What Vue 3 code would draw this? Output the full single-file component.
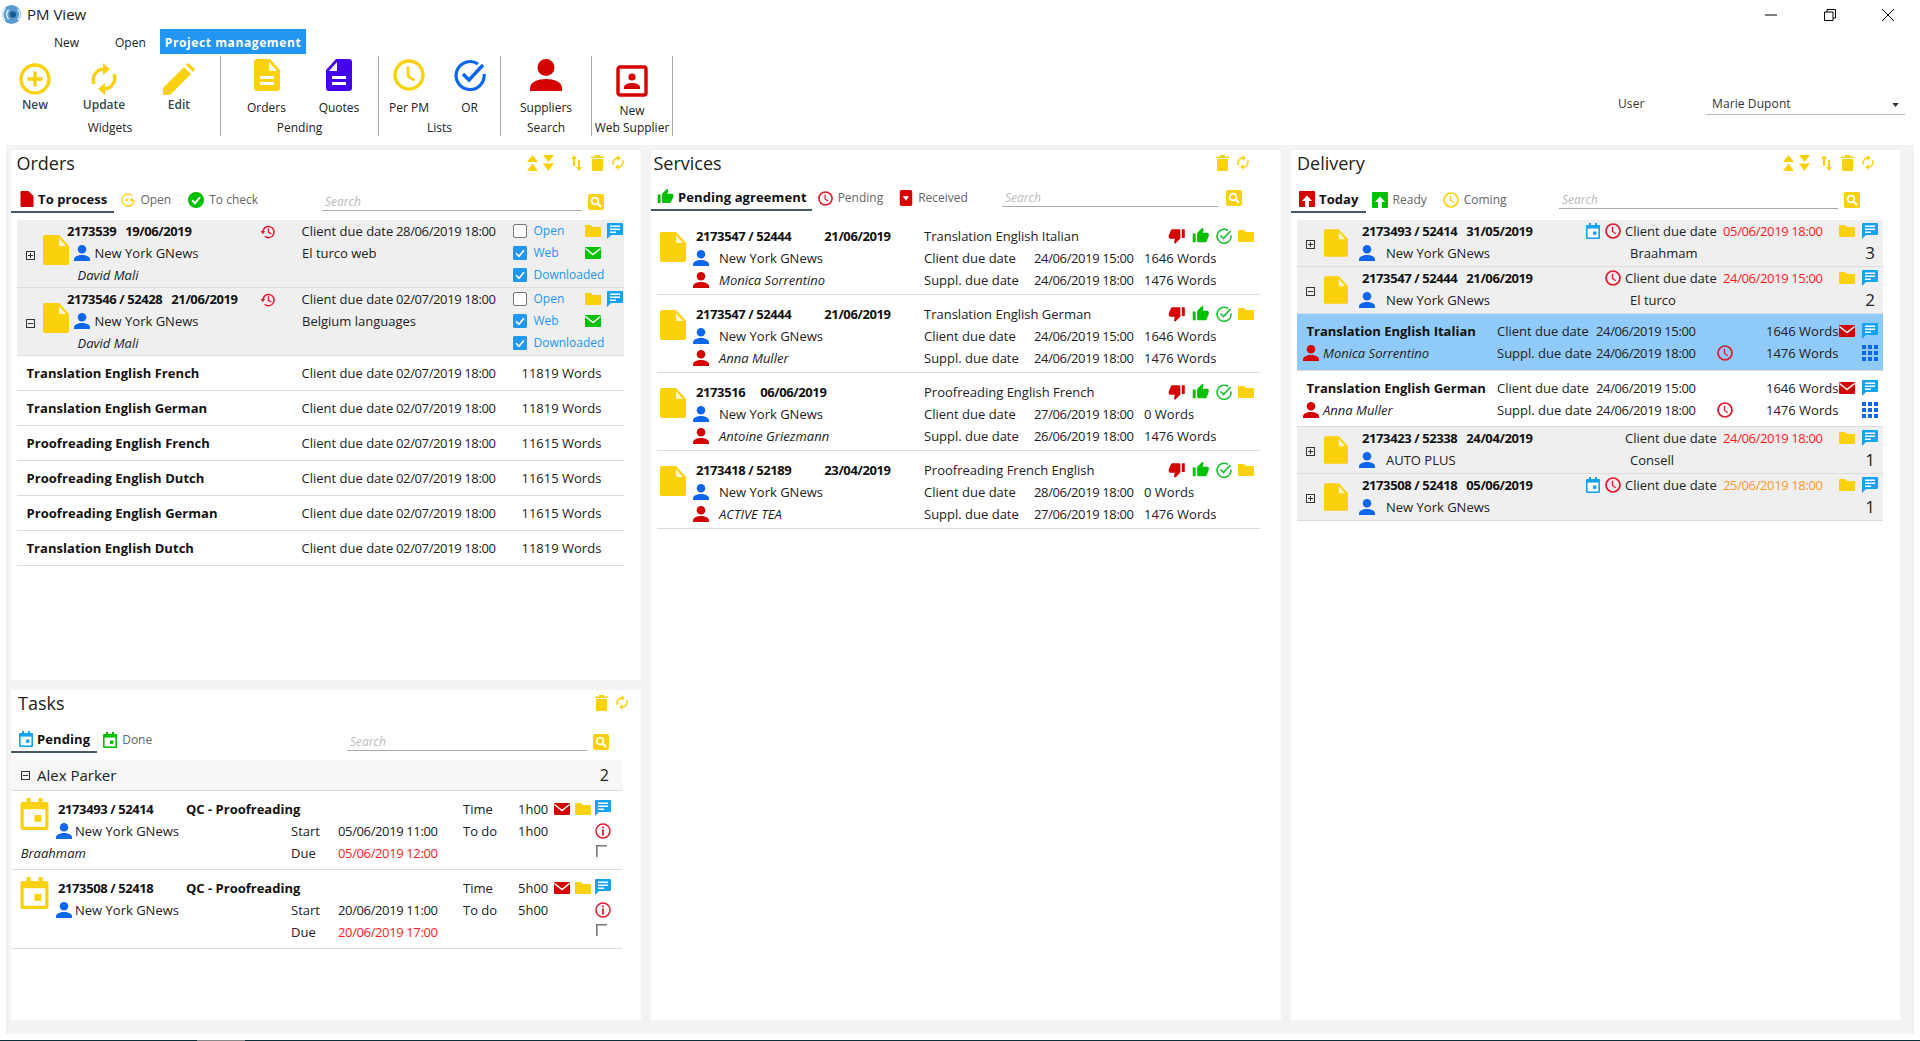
<script setup>
const orderGroups = [
  { id: '2173539', date: '19/06/2019', due: '28/06/2019 18:00', sub: 'El turco web', exp: 'plus' },
  { id: '2173546 / 52428', date: '21/06/2019', due: '02/07/2019 18:00', sub: 'Belgium languages', exp: 'minus' }
]
const orderItems = [
  ['Translation English French', '11819 Words'],
  ['Translation English German', '11819 Words'],
  ['Proofreading English French', '11615 Words'],
  ['Proofreading English Dutch', '11615 Words'],
  ['Proofreading English German', '11615 Words'],
  ['Translation English Dutch', '11819 Words']
]
const services = [
  { id: '2173547 / 52444', date: '21/06/2019', title: 'Translation English Italian', who: 'Monica Sorrentino', d1: '24/06/2019 15:00', w1: '1646 Words', d2: '24/06/2019 18:00' },
  { id: '2173547 / 52444', date: '21/06/2019', title: 'Translation English German', who: 'Anna Muller', d1: '24/06/2019 15:00', w1: '1646 Words', d2: '24/06/2019 18:00' },
  { id: '2173516', short: true, date: '06/06/2019', title: 'Proofreading English French', who: 'Antoine Griezmann', d1: '27/06/2019 18:00', w1: '0 Words', d2: '26/06/2019 18:00' },
  { id: '2173418 / 52189', date: '23/04/2019', title: 'Proofreading French English', who: 'ACTIVE TEA', d1: '28/06/2019 18:00', w1: '0 Words', d2: '27/06/2019 18:00' }
]
const delivery = [
  { t: 'g', exp: 'plus', id: '2173493 / 52414', date: '31/05/2019', cal: true, clock: true, due: '05/06/2019 18:00', tone: 'red', client: 'New York GNews', sub: 'Braahmam', n: 3 },
  { t: 'g', exp: 'minus', id: '2173547 / 52444', date: '21/06/2019', clock: true, due: '24/06/2019 15:00', tone: 'red', client: 'New York GNews', sub: 'El turco', n: 2 },
  { t: 'i', sel: true, title: 'Translation English Italian', who: 'Monica Sorrentino' },
  { t: 'i', title: 'Translation English German', who: 'Anna Muller' },
  { t: 'g', exp: 'plus', id: '2173423 / 52338', date: '24/04/2019', due: '24/06/2019 18:00', tone: 'red', client: 'AUTO PLUS', sub: 'Consell', n: 1 },
  { t: 'g', exp: 'plus', id: '2173508 / 52418', date: '05/06/2019', cal: true, clock: true, due: '25/06/2019 18:00', tone: 'orange', client: 'New York GNews', sub: '', n: 1 }
]
const tasks = [
  { id: '2173493 / 52414', time: '1h00', start: '05/06/2019 11:00', due: '05/06/2019 12:00', who: 'Braahmam' },
  { id: '2173508 / 52418', time: '5h00', start: '20/06/2019 11:00', due: '20/06/2019 17:00', who: '' }
]
</script>

<template>
  <div class="app">
    <svg class="sprite" aria-hidden="true">
      <symbol id="s-plusc" viewBox="0 0 32 32"><circle cx="16" cy="16" r="14" fill="none" stroke="currentColor" stroke-width="3.4"/><path d="M16 8.5v15M8.5 16h15" stroke="currentColor" stroke-width="3.4" fill="none"/></symbol>
      <symbol id="s-refresh" viewBox="0 0 26 32"><path d="M3 21A11 11 0 0 1 13 6M23 11a11 11 0 0 1-10 15" fill="none" stroke="currentColor" stroke-width="3.4"/><path d="M12 0v12l7-6zM14 20v12l-7-6z" fill="currentColor"/></symbol>
      <symbol id="s-pencil" viewBox="0 0 32 32"><path d="M0 32v-7L21 4l7 7L7 32zM23 2l2-2 7 6-2 3z" fill="currentColor"/></symbol>
      <symbol id="s-doclines" viewBox="0 0 26 32"><path d="M3 0h13l10 11v18a3 3 0 0 1-3 3H3a3 3 0 0 1-3-3V3a3 3 0 0 1 3-3z" fill="currentColor"/><path d="M15 3l8 9h-8z" fill="#fff"/><path d="M6 17h14v3H6zM6 23h14v3H6z" fill="#fff"/></symbol>
      <symbol id="s-clock" viewBox="0 0 32 32"><circle cx="16" cy="16" r="14" fill="none" stroke="currentColor" stroke-width="3.4"/><path d="M15 7.5V17l6.5 4.5" fill="none" stroke="currentColor" stroke-width="2.6"/></symbol>
      <symbol id="s-ocheck" viewBox="0 0 32 32"><path d="M24 5A14 14 0 1 0 30 15" fill="none" stroke="currentColor" stroke-width="3.2"/><path d="M9 15l6 6L29 6" fill="none" stroke="currentColor" stroke-width="3.4"/></symbol>
      <symbol id="s-person" viewBox="0 0 32 32"><circle cx="16" cy="8.5" r="8.5" fill="currentColor"/><path d="M0 32v-3c0-6 8-9 16-9s16 3 16 9v3z" fill="currentColor"/></symbol>
      <symbol id="s-contact" viewBox="0 0 32 32"><rect x="2" y="2" width="28" height="28" rx="2" fill="none" stroke="currentColor" stroke-width="3.4"/><circle cx="16" cy="12" r="3.6" fill="currentColor"/><path d="M8 24v-2c0-2 4-4 8-4s8 2 8 4v2z" fill="currentColor"/></symbol>
      <symbol id="s-doc" viewBox="0 0 26 30"><path d="M2 0h14l10 11v17a2 2 0 0 1-2 2H2a2 2 0 0 1-2-2V2a2 2 0 0 1 2-2z" fill="currentColor"/><path d="M16 3l7 8h-7z" fill="#fff5c8"/></symbol>
      <symbol id="s-folder" viewBox="0 0 16 12"><path d="M0 1a1 1 0 0 1 1-1h5l2 2h7a1 1 0 0 1 1 1v8a1 1 0 0 1-1 1H1a1 1 0 0 1-1-1z" fill="currentColor"/></symbol>
      <symbol id="s-chat" viewBox="0 0 16 16"><path d="M1 0h14a1 1 0 0 1 1 1v10a1 1 0 0 1-1 1H4l-4 4V1a1 1 0 0 1 1-1z" fill="currentColor"/><path d="M3 2.5h10V4H3zM3 5.5h10V7H3zM3 8.5h6V10H3z" fill="#fff"/></symbol>
      <symbol id="s-mail" viewBox="0 0 16 12"><rect width="16" height="12" rx="1" fill="currentColor"/><path d="M.5 1.500L8 7.500l7.500-6" fill="none" stroke="#fff" stroke-width="1.6"/></symbol>
      <symbol id="s-cal" viewBox="0 0 14 16"><path d="M1 2h2V0h2v2h4V0h2v2h2a1 1 0 0 1 1 1v12a1 1 0 0 1-1 1H1a1 1 0 0 1-1-1V3a1 1 0 0 1 1-1z" fill="currentColor"/><rect x="1.6" y="5.6" width="10.8" height="8.8" fill="#fff"/><rect x="7" y="8.5" width="3.4" height="3.4" fill="currentColor"/></symbol>
      <symbol id="s-cut" viewBox="0 0 13 16"><path d="M1 0h7l5 5v10a1 1 0 0 1-1 1H1a1 1 0 0 1-1-1V1a1 1 0 0 1 1-1z" fill="currentColor"/></symbol>
      <symbol id="s-otab" viewBox="0 0 16 16"><path d="M12.500 2.800A7 7 0 1 0 15 8" fill="none" stroke="currentColor" stroke-width="1.6"/><circle cx="6.500" cy="8" r="1.500" fill="currentColor"/><path d="M9.500 8h3.500M11.500 6l2 2-2 2" fill="none" stroke="currentColor" stroke-width="1.3"/></symbol>
      <symbol id="s-okfill" viewBox="0 0 16 16"><circle cx="8" cy="8" r="8" fill="currentColor"/><path d="M4 8.200l3 3 5-6" fill="none" stroke="#fff" stroke-width="2"/></symbol>
      <symbol id="s-recv" viewBox="0 0 14 18"><rect width="14" height="18" rx="2" fill="currentColor"/><path d="M3.500 7h7L7 12z" fill="#fff"/></symbol>
      <symbol id="s-upbox" viewBox="0 0 16 16"><rect width="16" height="16" rx="1" fill="currentColor"/><path d="M8 4.500l5 5.500h-3v6H6v-6H3z" fill="#fff"/></symbol>
      <symbol id="s-thup" viewBox="0 0 24 24"><path d="M1 21h4V9H1v12zm22-11c0-1.100-.9-2-2-2h-6.310l.95-4.570.03-.32c0-.41-.17-.79-.44-1.060L14.170 1 7.590 7.590C7.220 7.950 7 8.450 7 9v10c0 1.100.9 2 2 2h9c.83 0 1.540-.5 1.840-1.220l3.020-7.050c.09-.23.14-.47.14-.73v-2z" fill="currentColor"/></symbol>
      <symbol id="s-thdown" viewBox="0 0 24 24"><path d="M15 3H6c-.83 0-1.540.5-1.840 1.220l-3.020 7.050c-.09.23-.14.47-.14.73v2c0 1.100.9 2 2 2h6.310l-.95 4.570-.03.32c0 .41.17.79.44 1.060L9.830 23l6.590-6.590c.36-.36.58-.86.58-1.410V5c0-1.100-.9-2-2-2zm4 0v12h4V3h-4z" fill="currentColor"/></symbol>
      <symbol id="s-history" viewBox="0 0 16 16"><path d="M2.500 8.500a6 6 0 1 1 2 4.600" fill="none" stroke="currentColor" stroke-width="1.6"/><path d="M0 7.500h5L2.500 11z" fill="currentColor"/><path d="M8.500 4.500V9l3 1.600" fill="none" stroke="currentColor" stroke-width="1.4"/></symbol>
      <symbol id="s-grid" viewBox="0 0 16 16"><path d="M0 0h4v4H0zM6 0h4v4H6zM12 0h4v4h-4zM0 6h4v4H0zM6 6h4v4H6zM12 6h4v4h-4zM0 12h4v4H0zM6 12h4v4H6zM12 12h4v4h-4z" fill="currentColor"/></symbol>
      <symbol id="s-info" viewBox="0 0 16 16"><circle cx="8" cy="8" r="7" fill="none" stroke="currentColor" stroke-width="1.5"/><path d="M7.100 3.500h1.800v1.800H7.100zM7.100 6.600h1.800v6H7.100z" fill="currentColor"/></symbol>
      <symbol id="s-flag" viewBox="0 0 11 12"><path d="M.8 12V.8H11" fill="none" stroke="currentColor" stroke-width="1.6"/></symbol>
      <symbol id="s-ups" viewBox="0 0 11 16"><path d="M5.500 0L11 7H0zM5.500 8.500L11 16H0z" fill="currentColor"/></symbol>
      <symbol id="s-downs" viewBox="0 0 11 16"><path d="M0 0h11L5.500 7zM0 8.500h11L5.500 16z" fill="currentColor"/></symbol>
      <symbol id="s-sort" viewBox="0 0 11 16"><path d="M3 0l3 4H4v7H2V4H0zM7 5h2v7h2l-3 4-3-4h2z" fill="currentColor"/></symbol>
      <symbol id="s-trash" viewBox="0 0 13 16"><path d="M4 0h5v1.400h4V3H0V1.400h4zM1 4h11v11a1 1 0 0 1-1 1H2a1 1 0 0 1-1-1z" fill="currentColor"/></symbol>
      <symbol id="s-search" viewBox="0 0 16 16"><rect width="16" height="16" rx="2" fill="currentColor"/><circle cx="7" cy="7" r="3.4" fill="none" stroke="#fff" stroke-width="1.8"/><path d="M9.500 9.500l3.500 3.500" stroke="#fff" stroke-width="2"/></symbol>
      <symbol id="s-cb" viewBox="0 0 14 14"><rect width="14" height="14" rx="1.5" fill="currentColor"/><path d="M3 7.200l3 3 5-6" fill="none" stroke="#fff" stroke-width="1.6"/></symbol>
      <symbol id="s-plus" viewBox="0 0 9 9"><rect x=".5" y=".5" width="8" height="8" fill="none" stroke="currentColor"/><path d="M2 4.500h5M4.500 2v5" stroke="currentColor"/></symbol>
      <symbol id="s-minus" viewBox="0 0 9 9"><rect x=".5" y=".5" width="8" height="8" fill="none" stroke="currentColor"/><path d="M2 4.500h5" stroke="currentColor"/></symbol>
      <symbol id="s-logo" viewBox="0 0 20 20"><circle cx="10" cy="10" r="10" fill="#5a9bcf"/><circle cx="11.500" cy="10" r="3.4" fill="#1a5f94"/><path d="M3.500 3.500a9.500 9.500 0 0 0 0 13M7 5a7 7 0 0 0 0 10M16.500 4.500a8 8 0 0 1 0 11" fill="none" stroke="#eef5fb" stroke-width="1.4"/></symbol>
    </svg>

    <header class="titlebar">
      <svg class="logo"><use href="#s-logo"/></svg>
      <span class="apptitle">PM View</span>
      <div class="winbtns">
        <svg class="wb" viewBox="0 0 12 12"><path d="M0 6h12" stroke="#000" stroke-width="1" fill="none"/></svg>
        <svg class="wb" viewBox="0 0 12 12"><path d="M.5 3h8.500v8.500H.5zM3 3V.5h8.500V9H9" stroke="#000" stroke-width="1" fill="none"/></svg>
        <svg class="wb" viewBox="0 0 12 12"><path d="M0 0l12 12M12 0L0 12" stroke="#000" stroke-width="1" fill="none"/></svg>
      </div>
    </header>

    <nav class="menu">
      <span class="m1">New</span>
      <span class="m2">Open</span>
      <span class="m3">Project management</span>
    </nav>

    <section class="ribbon">
      <div class="group g1">
        <div class="items">
          <div class="item"><svg class="ri yellow"><use href="#s-plusc"/></svg><span class="strong">New</span></div>
          <div class="item"><svg class="ri yellow"><use href="#s-refresh"/></svg><span class="strong">Update</span></div>
          <div class="item"><svg class="ri yellow"><use href="#s-pencil"/></svg><span class="strong">Edit</span></div>
        </div>
        <div class="gtitle">Widgets</div>
      </div>
      <div class="group g2">
        <div class="items">
          <div class="item"><svg class="ri narrow yellow"><use href="#s-doclines"/></svg><span>Orders</span></div>
          <div class="item"><svg class="ri narrow violet flip"><use href="#s-doclines"/></svg><span>Quotes</span></div>
        </div>
        <div class="gtitle">Pending</div>
      </div>
      <div class="group g3">
        <div class="items">
          <div class="item"><svg class="ri yellow"><use href="#s-clock"/></svg><span>Per PM</span></div>
          <div class="item"><svg class="ri blue"><use href="#s-ocheck"/></svg><span>OR</span></div>
        </div>
        <div class="gtitle">Lists</div>
      </div>
      <div class="group g4">
        <div class="items">
          <div class="item"><svg class="ri red"><use href="#s-person"/></svg><span>Suppliers</span></div>
        </div>
        <div class="gtitle">Search</div>
      </div>
      <div class="group g5">
        <div class="items">
          <div class="item"><svg class="ri red"><use href="#s-contact"/></svg><span>New</span></div>
        </div>
        <div class="gtitle">Web Supplier</div>
      </div>
      <div class="user">
        <span class="ulabel">User</span>
        <div class="dropdown">
          <span>Marie Dupont</span>
          <svg class="caret" viewBox="0 0 8 5"><path d="M0 0h8L4 5z" fill="#333"/></svg>
        </div>
      </div>
    </section>

    <main class="content">
      <div class="leftcol">
        <section class="panel p-orders">
          <div class="head">
            <h2>Orders</h2>
            <div class="tools">
              <svg class="t11 yellow"><use href="#s-ups"/></svg>
              <svg class="t11 yellow tdown"><use href="#s-downs"/></svg>
              <svg class="t11 yellow tsort"><use href="#s-sort"/></svg>
              <svg class="t13 yellow ttrash"><use href="#s-trash"/></svg>
              <svg class="t12 yellow trefresh"><use href="#s-refresh"/></svg>
            </div>
          </div>
          <div class="tabs">
            <div class="tab active"><svg class="tb14 red"><use href="#s-cut"/></svg><span>To process</span></div>
            <div class="tab"><svg class="tb14 yellow"><use href="#s-otab"/></svg><span>Open</span></div>
            <div class="tab"><svg class="tb16 green"><use href="#s-okfill"/></svg><span>To check</span></div>
            <div class="search">
              <div class="sfield">Search</div>
              <svg class="sbtn yellow"><use href="#s-search"/></svg>
            </div>
          </div>
          <div class="list o-list">
            <div v-for="g in orderGroups" :key="g.id" class="o-group">
              <svg class="exp o-exp"><use :href="'#s-' + g.exp"/></svg>
              <svg class="doc o-doc"><use href="#s-doc"/></svg>
              <div class="o-l1 b num"><span>{{ g.id }}</span><span class="gap9">{{ g.date }}</span></div>
              <svg class="hist crimson"><use href="#s-history"/></svg>
              <div class="o-due"><span class="lab94">Client due date</span><span class="dt">{{ g.due }}</span></div>
              <div class="o-chk r1"><span class="cb0"></span><span class="lnk">Open</span></div>
              <div class="icons r1c"><svg class="fo yellow"><use href="#s-folder"/></svg><svg class="ch sky"><use href="#s-chat"/></svg></div>
              <div class="o-l2"><svg class="pe blue"><use href="#s-person"/></svg><span>New York GNews</span></div>
              <div class="o-sub">{{ g.sub }}</div>
              <div class="o-chk r2"><svg class="cb sky2"><use href="#s-cb"/></svg><span class="lnk">Web</span></div>
              <div class="icons r2c"><svg class="fo green"><use href="#s-mail"/></svg></div>
              <div class="o-l3 i">David Mali</div>
              <div class="o-chk r3"><svg class="cb sky2"><use href="#s-cb"/></svg><span class="lnk">Downloaded</span></div>
            </div>
            <div v-for="it in orderItems" :key="it[0]" class="o-item">
              <div class="b o-title">{{ it[0] }}</div>
              <div class="o-duei"><span class="lab94">Client due date</span><span class="dt">02/07/2019 18:00</span></div>
              <div>{{ it[1] }}</div>
            </div>
          </div>
        </section>

        <section class="panel p-tasks">
          <div class="head">
            <h2>Tasks</h2>
            <div class="tools">
              <svg class="t13 yellow"><use href="#s-trash"/></svg>
              <svg class="t12 yellow trefresh"><use href="#s-refresh"/></svg>
            </div>
          </div>
          <div class="tabs">
            <div class="tab active"><svg class="tb14 sky"><use href="#s-cal"/></svg><span>Pending</span></div>
            <div class="tab"><svg class="tb14 green"><use href="#s-cal"/></svg><span>Done</span></div>
            <div class="search">
              <div class="sfield">Search</div>
              <svg class="sbtn yellow"><use href="#s-search"/></svg>
            </div>
          </div>
          <div class="t-head">
            <svg class="exp"><use href="#s-minus"/></svg>
            <span class="t-name">Alex Parker</span>
            <span class="t-count">2</span>
          </div>
          <div v-for="t in tasks" :key="t.id" class="t-row">
            <svg class="t-cal yellow"><use href="#s-cal"/></svg>
            <div class="b t-id num">{{ t.id }}</div>
            <div class="b t-qc">QC - Proofreading</div>
            <div class="c6">Time</div>
            <div class="c7">{{ t.time }}</div>
            <div class="c8 t-icons"><svg class="fo red"><use href="#s-mail"/></svg><svg class="fo yellow"><use href="#s-folder"/></svg><svg class="ch sky"><use href="#s-chat"/></svg></div>
            <div class="t-cl"><svg class="pe blue"><use href="#s-person"/></svg><span>New York GNews</span></div>
            <div class="c4">Start</div>
            <div class="c5 dt">{{ t.start }}</div>
            <div class="c6">To do</div>
            <div class="c7">{{ t.time }}</div>
            <div class="c8 t-mark"><svg class="pe crimson"><use href="#s-info"/></svg></div>
            <div class="t-who i">{{ t.who }}</div>
            <div class="c4">Due</div>
            <div class="c5 dt redt">{{ t.due }}</div>
            <div class="c8 t-flag"><svg class="fl"><use href="#s-flag"/></svg></div>
          </div>
        </section>
      </div>

      <section class="panel p-services">
        <div class="head">
          <h2>Services</h2>
          <div class="tools">
            <svg class="t13 yellow"><use href="#s-trash"/></svg>
            <svg class="t12 yellow trefresh"><use href="#s-refresh"/></svg>
          </div>
        </div>
        <div class="tabs">
          <div class="tab active"><svg class="tb17 green"><use href="#s-thup"/></svg><span>Pending agreement</span></div>
          <div class="tab"><svg class="tb15 crimson"><use href="#s-clock"/></svg><span>Pending</span></div>
          <div class="tab"><svg class="tb14h red"><use href="#s-recv"/></svg><span>Received</span></div>
          <div class="search">
            <div class="sfield">Search</div>
            <svg class="sbtn yellow"><use href="#s-search"/></svg>
          </div>
        </div>
        <div class="list">
          <div v-for="s in services" :key="s.id + s.title" class="s-row">
            <svg class="doc s-doc"><use href="#s-doc"/></svg>
            <div class="s-l1 b num"><span>{{ s.id }}</span><span :class="s.short ? 'gap15' : 'gap33'">{{ s.date }}</span></div>
            <div class="s-title">
              <span>{{ s.title }}</span>
              <div class="s-icons">
                <svg class="th red"><use href="#s-thdown"/></svg>
                <svg class="th green"><use href="#s-thup"/></svg>
                <svg class="pe limeg"><use href="#s-ocheck"/></svg>
                <svg class="fo yellow"><use href="#s-folder"/></svg>
              </div>
            </div>
            <div class="s-who"><svg class="pe blue"><use href="#s-person"/></svg><span>New York GNews</span></div>
            <div class="s3">Client due date</div>
            <div class="s4 dt">{{ s.d1 }}</div>
            <div class="s5">{{ s.w1 }}</div>
            <div class="s-who"><svg class="pe red"><use href="#s-person"/></svg><span class="i">{{ s.who }}</span></div>
            <div class="s3">Suppl. due date</div>
            <div class="s4 dt">{{ s.d2 }}</div>
            <div class="s5">1476 Words</div>
          </div>
        </div>
      </section>

      <section class="panel p-delivery">
        <div class="head">
          <h2>Delivery</h2>
          <div class="tools">
            <svg class="t11 yellow"><use href="#s-ups"/></svg>
            <svg class="t11 yellow tdown"><use href="#s-downs"/></svg>
            <svg class="t11 yellow tsort"><use href="#s-sort"/></svg>
            <svg class="t13 yellow ttrash"><use href="#s-trash"/></svg>
            <svg class="t12 yellow trefresh"><use href="#s-refresh"/></svg>
          </div>
        </div>
        <div class="tabs">
          <div class="tab active"><svg class="tb16 red"><use href="#s-upbox"/></svg><span>Today</span></div>
          <div class="tab"><svg class="tb16 green"><use href="#s-upbox"/></svg><span>Ready</span></div>
          <div class="tab"><svg class="tb16 yellow"><use href="#s-clock"/></svg><span>Coming</span></div>
          <div class="search">
            <div class="sfield">Search</div>
            <svg class="sbtn yellow"><use href="#s-search"/></svg>
          </div>
        </div>
        <div class="list">
          <template v-for="(d, idx) in delivery" :key="idx">
            <div v-if="d.t === 'g'" class="d-group">
              <svg class="exp d-exp"><use :href="'#s-' + d.exp"/></svg>
              <svg class="doc d-doc"><use href="#s-doc"/></svg>
              <div class="d-l1 b num"><span>{{ d.id }}</span><span class="gap9">{{ d.date }}</span></div>
              <div class="d-flags">
                <svg v-if="d.cal" class="tb14 sky"><use href="#s-cal"/></svg>
                <svg v-if="d.clock" class="pe crimson"><use href="#s-clock"/></svg>
              </div>
              <div class="d-due"><span class="lab98">Client due date</span><span class="dt" :class="d.tone === 'red' ? 'redt' : 'oranget'">{{ d.due }}</span></div>
              <div class="icons d-ic"><svg class="fo yellow"><use href="#s-folder"/></svg><svg class="ch sky"><use href="#s-chat"/></svg></div>
              <div class="d-l2"><svg class="pe blue"><use href="#s-person"/></svg><span>{{ d.client }}</span></div>
              <div class="d-sub">{{ d.sub }}</div>
              <div class="d-n">{{ d.n }}</div>
            </div>
            <div v-else class="d-item" :class="{ sel: d.sel }">
              <div class="b d-title">{{ d.title }}</div>
              <div>Client due date</div>
              <div class="dt">24/06/2019 15:00</div>
              <div></div>
              <div>1646 Words</div>
              <svg class="fo red d-mail"><use href="#s-mail"/></svg>
              <svg class="ch sky"><use href="#s-chat"/></svg>
              <div class="d-who"><svg class="pe red"><use href="#s-person"/></svg><span class="i">{{ d.who }}</span></div>
              <div>Suppl. due date</div>
              <div class="dt">24/06/2019 18:00</div>
              <svg class="pe crimson"><use href="#s-clock"/></svg>
              <div>1476 Words</div>
              <div></div>
              <svg class="pe blue"><use href="#s-grid"/></svg>
            </div>
          </template>
        </div>
      </section>
    </main>

    <div class="bottomline"><span class="bl-seg"></span></div>
  </div>
</template>

<style>
html, body { margin: 0; background: #fff; }
</style>

<style scoped>
.app { width: 1920px; height: 1041px; display: flex; flex-direction: column; overflow: hidden; background: #fff; font-family: "Open Sans", "Liberation Sans", sans-serif; font-size: 13px; color: #212121; }
.sprite { width: 0; height: 0; position: absolute; }
svg { display: block; flex: none; overflow: visible; }

.yellow { color: #fbd00c; } .red { color: #d50000; } .blue { color: #0d66ee; } .violet { color: #4500ee; }
.green { color: #00c000; } .crimson { color: #e0182c; } .sky { color: #12a4f4; } .sky2 { color: #2196f3; } .limeg { color: #18c030; }
.b { font-weight: 700; color: #111; } .i { font-style: italic; }
.redt { color: #ff1a1a; } .oranget { color: #fb9a1e; }
.dt { letter-spacing: -.37px; }
.num { letter-spacing: -.4px; }

.titlebar { height: 29px; display: flex; align-items: center; flex: none; }
.logo { width: 19px; height: 19px; margin-left: 2px; }
.apptitle { margin-left: 6px; font-size: 15px; padding-bottom: 2px; }
.winbtns { margin-left: auto; display: flex; gap: 46.500px; padding-right: 26px; }
.wb { width: 12px; height: 12px; }

.menu { height: 25px; flex: none; display: flex; align-items: flex-start; font-size: 12px; line-height: 28px; }
.m1 { margin-left: 54px; width: 24px; }
.m2 { margin-left: 37px; width: 30px; }
.m3 { margin-left: 15px; width: 146px; height: 25px; background: #2196f3; color: #fff; font-weight: 700; text-align: center; letter-spacing: .6px; }

.ribbon { height: 80px; margin-top: 2px; flex: none; display: flex; font-size: 12px; }
.group { display: flex; flex-direction: column; border-right: 1px solid #aaa; box-sizing: border-box; }
.items { height: 67px; display: grid; }
.item { display: flex; flex-direction: column; align-items: center; line-height: 16px; }
.gtitle { text-align: center; line-height: 16px; white-space: nowrap; }
.ri { width: 32px; height: 32px; }
.narrow { width: 26px; }
.flip { transform: scaleX(-1); }
.strong { font-weight: 600; color: #37474f; }
.g1 { width: 221px; } .g1 .items { grid-template-columns: 70px 68px 82px; } .g1 .item { padding-top: 7px; gap: 2px; }
.g2 { width: 158px; } .g2 .items { grid-template-columns: 91px 54px; } .g2 .item { padding-top: 3px; gap: 9px; }
.g3 { width: 122px; } .g3 .items { grid-template-columns: 60px 61px; } .g3 .item { padding-top: 3px; gap: 9px; }
.g4 { width: 91px; } .g4 .items { grid-template-columns: 90px; } .g4 .item { padding-top: 3px; gap: 9px; }
.g5 { width: 81px; } .g5 .items { grid-template-columns: 80px; } .g5 .item { padding-top: 9px; gap: 6px; }
.user { margin-left: auto; margin-right: 15px; display: flex; align-items: flex-start; padding-top: 40px; font-size: 12px; color: #333; letter-spacing: .1px; }
.ulabel { width: 88px; line-height: 16px; }
.dropdown { width: 199px; height: 18px; border-bottom: 1px solid #bbb; display: flex; align-items: center; justify-content: space-between; }
.dropdown span { padding: 0 0 3px 6px; }
.caret { width: 7px; height: 4px; margin-right: 6px; }

.content { margin: 9px 6px 0; height: 889px; flex: none; box-sizing: border-box; padding: 5px 14px 14px 5px; background: #f3f3f3; display: grid; grid-template-columns: 630px 630px 609px; column-gap: 10px; }
.leftcol { display: flex; flex-direction: column; gap: 10px; }
.panel { background: #fff; min-width: 0; }
.p-orders { height: 530px; }
.p-tasks { height: 330px; }

.head { height: 26px; display: flex; align-items: center; }
h2 { margin: 0; font-size: 18px; font-weight: 400; color: #212121; }
.tools { margin-left: auto; display: flex; }
.t11 { width: 11px; height: 16px; } .t12 { width: 12px; height: 15px; } .t13 { width: 13px; height: 16px; }
.tdown { margin-left: 5px; } .tsort { margin-left: 17px; } .ttrash { margin-left: 9px; } .trefresh { margin-left: 8px; }
.p-orders .head { padding: 0 17px 0 5.500px; }
.p-services .head { padding: 0 32px 0 2.500px; }
.p-delivery .head { padding: 0 26px 0 6px; }
.p-delivery .tsort { margin-left: 11px; }
.p-tasks .head { padding: 0 13px 0 7px; }

.tabs { height: 37px; display: flex; font-size: 12px; }
.p-services .tabs { height: 35px; }
.tab { height: 100%; box-sizing: border-box; display: flex; align-items: flex-end; gap: 5px; padding: 0 10px 2px 6px; border-bottom: 2px solid transparent; color: #666; line-height: 18px; }
.tab.active { padding: 0 7px 3px 8px; border-bottom-color: #455a64; font-weight: 700; font-size: 13px; color: #111; gap: 4px; letter-spacing: .1px; }
.p-services .tab.active { padding: 0 5px 3px 6px; }
.p-orders .tab.active { padding-left: 9px; }
.p-orders .tab { padding-left: 7px; }
.tab svg { margin-bottom: 1px; }
.tb14 { width: 14px; height: 16px; } .tb15 { width: 15px; height: 15px; } .tb16 { width: 16px; height: 16px; } .tb17 { width: 17px; height: 17px; } .tb14h { width: 14px; height: 16px; }
.search { margin-left: auto; display: flex; align-items: flex-end; gap: 6px; padding-bottom: 2px; }
.sfield { border-bottom: 1px solid #aaa; height: 17px; padding-left: 3px; line-height: 18px; font-style: italic; color: #bbb; font-size: 12px; }
.sbtn { width: 16px; height: 16px; margin-bottom: 1px; }
.p-orders .sfield { width: 257px; } .p-orders .search { margin-right: 37px; }
.p-services .sfield { width: 213px; line-height: 17px; } .p-services .search { margin-right: 39px; gap: 8px; padding-bottom: 4px; }
.p-delivery .sfield { width: 276px; } .p-delivery .search { margin-right: 40px; padding-bottom: 4px; }
.p-tasks .sfield { width: 237px; } .p-tasks .search { margin-right: 32px; }

.exp { width: 9px; height: 9px; color: #333; }
.doc { color: #fbd00c; }
.fo { width: 16px; height: 12px; } .ch { width: 16px; height: 16px; } .pe { width: 16px; height: 16px; }
.th { width: 17.500px; height: 17.500px; }
.gap9 { margin-left: 9px; } .gap15 { margin-left: 15px; } .gap33 { margin-left: 33px; }
.lab94 { display: inline-block; width: 94.500px; } .lab98 { display: inline-block; width: 98px; }
.lnk { color: #2196f3; font-size: 12px; }
.list { display: block; }

.o-list { margin: 7px 0 0 6px; width: 607px; }
.o-group { height: 68px; box-sizing: border-box; background: #efefef; border-bottom: 1px solid #dcdcdc; display: grid; grid-template-columns: 26px 24px 193px 41px 212px 72px 39px; grid-template-rows: repeat(3, 22px); align-items: center; line-height: 22px; white-space: nowrap; }
.o-exp { grid-column: 1; grid-row: 1 / 4; align-self: start; margin: 31px 0 0 9px; }
.o-doc { grid-column: 2; grid-row: 1 / 4; align-self: start; margin-top: 15px; width: 26px; height: 30px; }
.o-l1 { grid-column: 3; grid-row: 1; display: flex; }
.hist { grid-column: 4; grid-row: 1; width: 16px; height: 15px; }
.o-due { grid-column: 5; grid-row: 1; padding-left: .5px; }
.o-chk { grid-column: 6; display: flex; align-items: center; gap: 6.500px; }
.r1 { grid-row: 1; } .r2 { grid-row: 2; } .r3 { grid-row: 3; }
.cb0 { width: 12px; height: 12px; border: 1px solid #777; border-radius: 2px; background: #fff; }
.cb { width: 14px; height: 14px; }
.icons { display: flex; align-items: center; gap: 6px; grid-column: 7; }
.r1c { grid-row: 1; } .r2c { grid-row: 2; }
.o-l2 { grid-column: 3; grid-row: 2; display: flex; align-items: center; gap: 4.500px; padding-left: 7px; }
.o-sub { grid-column: 5; grid-row: 2; padding-left: 1px; }
.o-l3 { grid-column: 3; grid-row: 3; padding-left: 10.500px; }
.o-item { height: 35px; box-sizing: border-box; border-bottom: 1px solid #dcdcdc; display: grid; grid-template-columns: 284.500px 220px 1fr; align-items: center; white-space: nowrap; }
.o-title { padding-left: 9.500px; letter-spacing: .05px; }

.s-row { height: 78px; box-sizing: border-box; margin-left: 6px; width: 603px; padding-top: 8px; border-bottom: 1px solid #dcdcdc; display: grid; grid-template-columns: 36px 231px 110px 110px 116px; grid-template-rows: repeat(3, 22px); align-items: center; line-height: 22px; white-space: nowrap; }
.p-services .list { margin-top: 6px; }
.s-doc { grid-column: 1; grid-row: 1 / 4; align-self: start; margin: 6px 0 0 3px; width: 26px; height: 32px; }
.s-l1 { grid-column: 2; grid-row: 1; display: flex; padding-left: 3px; }
.s-title { grid-column: 3 / 6; grid-row: 1; display: flex; align-items: center; justify-content: space-between; padding-right: 6px; }
.s-icons { display: flex; align-items: center; gap: 6.500px; }
.s-who { grid-column: 2; display: flex; align-items: center; gap: 10px; }
.s3 { grid-column: 3; } .s4 { grid-column: 4; } .s5 { grid-column: 5; }

.p-delivery .list { margin: 7px 0 0 6px; width: 586px; }
.d-group { height: 47px; box-sizing: border-box; background: #efefef; border-bottom: 1px solid #dcdcdc; display: grid; grid-template-columns: 27px 35px 227px 39px 214px 44px; grid-template-rows: 22px 22px; align-items: center; line-height: 22px; white-space: nowrap; }
.d-exp { grid-column: 1; grid-row: 1 / 3; align-self: start; margin: 20px 0 0 9px; }
.d-doc { grid-column: 2; grid-row: 1 / 3; align-self: start; margin-top: 8px; width: 24px; height: 30px; }
.d-l1 { grid-column: 3; grid-row: 1; display: flex; padding-left: 3px; }
.d-flags { grid-column: 4; grid-row: 1; display: flex; justify-content: flex-end; gap: 5px; padding-right: 4px; align-items: center; }
.d-due { grid-column: 5; grid-row: 1; }
.d-ic { grid-column: 6; grid-row: 1; gap: 7px; }
.d-l2 { grid-column: 3; grid-row: 2; display: flex; align-items: center; gap: 11px; }
.d-sub { grid-column: 5; grid-row: 2; padding-left: 5px; }
.d-n { grid-column: 6; grid-row: 2; text-align: right; padding-right: 8px; font-size: 17px; }
.d-item { height: 56.500px; box-sizing: border-box; padding-top: 6px; border-bottom: 1px solid #dcdcdc; display: grid; grid-template-columns: 200px 99px 121px 49px 73px 23px 21px; grid-template-rows: 22px 22px; align-items: center; line-height: 22px; white-space: nowrap; }
.d-item.sel { background: #90caf9; }
.d-title { padding-left: 9.500px; }
.d-who { display: flex; align-items: center; gap: 4px; padding-left: 6px; }

.t-head { margin-left: 1px; width: 610px; height: 31px; box-sizing: border-box; margin-top: 7px; background: #f7f7f7; border-bottom: 1px solid #dcdcdc; display: flex; align-items: center; padding: 0 13px 0 9px; }
.t-name { margin-left: 7px; font-size: 15px; }
.t-count { margin-left: auto; font-size: 16px; }
.t-row { margin-left: 1px; width: 610px; height: 79px; box-sizing: border-box; padding-top: 6.500px; border-bottom: 1px solid #dcdcdc; display: grid; grid-template-columns: 44px 130px 105px 47px 125px 55px 36px 68px; grid-template-rows: repeat(3, 22px); align-items: center; line-height: 22px; white-space: nowrap; }
.t-cal { grid-column: 1; grid-row: 1 / 3; align-self: start; margin-left: 7.500px; width: 29px; height: 32px; }
.t-id { grid-column: 2; grid-row: 1; padding-left: 2px; }
.t-qc { grid-column: 3 / 6; grid-row: 1; }
.c4 { grid-column: 4; } .c5 { grid-column: 5; } .c6 { grid-column: 6; } .c7 { grid-column: 7; } .c8 { grid-column: 8; }
.t-icons { display: flex; align-items: center; gap: 4.500px; }
.t-icons .ch { margin-top: -2px; }
.t-cl { grid-column: 2; grid-row: 2; display: flex; align-items: center; gap: 3px; }
.t-mark { padding-left: 41px; }
.t-who { grid-column: 1 / 3; grid-row: 3; padding-left: 8.700px; }
.t-flag { padding-left: 42px; }
.fl { width: 11px; height: 12px; color: #777; margin-top: -4px; }

.bottomline { margin-top: auto; height: 1px; flex: none; background: #0c2c3a; display: flex; }
.bl-seg { margin-left: 197px; width: 48px; background: #888; }
</style>
